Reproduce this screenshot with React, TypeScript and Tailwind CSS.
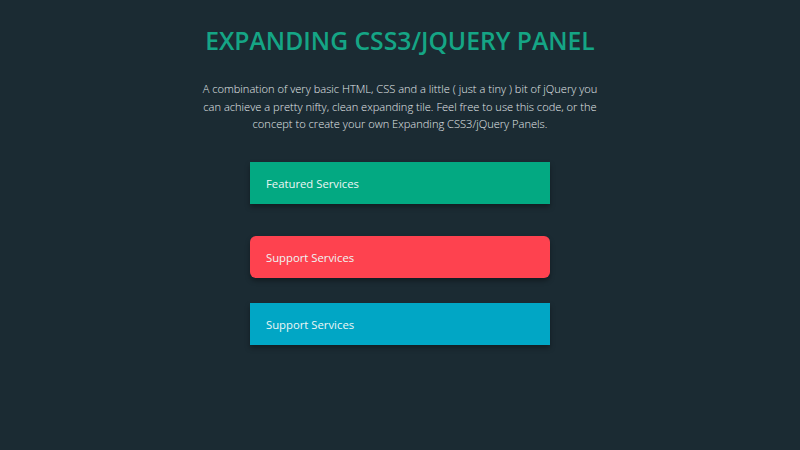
const panels = [
  { title: 'Featured Services', className: 'bg-[#03a982] mt-[29px]' },
  { title: 'Support Services', className: 'bg-[#fe424f] rounded-md mt-8' },
  { title: 'Support Services', className: 'bg-[#01a6c5] mt-[25px]' },
];

const App = () => {
  return (
    <div className="w-[800px] h-[450px] bg-[#1b2b33] font-['Open_Sans',sans-serif] flex flex-col items-center">
      <h1 className="mt-[26px] text-[24.7px] leading-[30px] font-semibold text-[#15a585]">
        EXPANDING CSS3/JQUERY PANEL
      </h1>
      <p className="mt-[24px] w-[402px] text-center text-[11.1px] leading-[17.5px] font-light text-[#e2e8ea]">
        A combination of very basic HTML, CSS and a little ( just a tiny ) bit of jQuery you can achieve a pretty nifty,
        clean expanding tile. Feel free to use this code, or the concept to create your own Expanding CSS3/jQuery Panels.
      </p>
      {panels.map((panel, i) => (
        <div
          key={i}
          className={`w-[300px] h-[42px] flex items-center px-4 pt-[3px] text-[11.3px] text-[#eef6f5] shadow-[0_3px_5px_rgba(0,0,0,0.35)] ${panel.className}`}
        >
          {panel.title}
        </div>
      ))}
    </div>
  );
};

export default App;
